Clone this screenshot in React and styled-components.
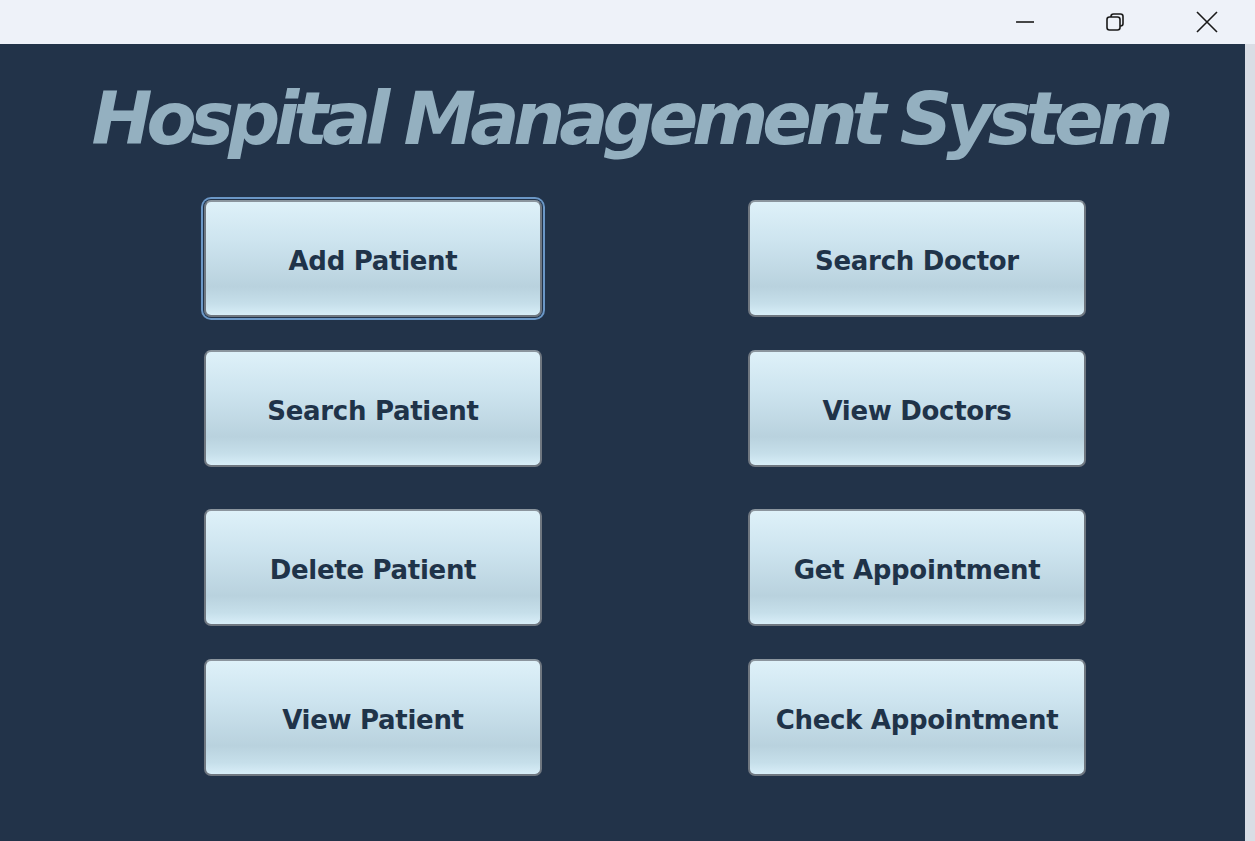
import styled, { createGlobalStyle } from 'styled-components';

const GlobalStyle = createGlobalStyle`
  html, body {
    margin: 0;
    padding: 0;
    background: #eef2f9;
    overflow: hidden;
  }
  * {
    box-sizing: border-box;
  }
`;

const Window = styled.div`
  width: 1255px;
  height: 841px;
  display: flex;
  flex-direction: column;
  background: #eef2f9;
`;

const TitleBar = styled.div`
  height: 44px;
  display: flex;
  justify-content: flex-end;
  align-items: center;
  flex-shrink: 0;
  padding-right: 2px;
`;

const WinButton = styled.div`
  width: 92px;
  height: 44px;
  margin-left: ${({ $shift }) => $shift || 0}px;
  display: flex;
  align-items: center;
  justify-content: center;
  color: #1a1a1a;
`;

const Body = styled.div`
  flex: 1;
  display: flex;
`;

const Panel = styled.div`
  flex: 1;
  background: #223349;
  display: flex;
  flex-direction: column;
`;

const ScrollStrip = styled.div`
  width: 10px;
  background: #d9dde5;
`;

const Heading = styled.h1`
  margin: 35px 0 0 0;
  text-align: center;
  font-family: 'DejaVu Sans', Verdana, sans-serif;
  font-weight: bold;
  font-style: italic;
  font-size: 73px;
  line-height: 80px;
  letter-spacing: -6.05px;
  color: #94b0c0;
  white-space: nowrap;
  padding-left: 14px;
`;

const Grid = styled.div`
  margin: 41px 0 0 204px;
  display: grid;
  grid-template-columns: 338px 338px;
  column-gap: 206px;
  grid-template-rows: 117px 117px 117px 117px;
  row-gap: 33px;
  & > :nth-child(n + 5) {
    margin-top: 9px;
  }
`;

const Button = styled.button`
  width: 338px;
  height: 117px;
  border: 2px solid #6f7780;
  border-top-color: #8b959e;
  border-radius: 7px;
  background: linear-gradient(
    to bottom,
    #def1f9 0%,
    #cde4ef 35%,
    #b9d2de 75%,
    #c6dfea 90%,
    #d8eef8 100%
  );
  font-family: 'DejaVu Sans', Tahoma, sans-serif;
  font-weight: bold;
  font-size: 26px;
  letter-spacing: -0.3px;
  color: #1f3349;
  cursor: pointer;
  box-shadow: ${({ $focused }) => ($focused ? '0 0 0 1px #223349, 0 0 0 3px #6b97c6' : 'none')};
  padding: 4px 0 0 0;
`;

const Minimize = () => (
  <svg width="20" height="20" viewBox="0 0 20 20" fill="none" stroke="currentColor" strokeWidth="1.6">
    <path d="M1 10h18" />
  </svg>
);

const Restore = () => (
  <svg width="20" height="20" viewBox="0 0 20 20" fill="none" stroke="currentColor" strokeWidth="1.6">
    <rect x="2" y="5" width="13" height="13" rx="2.5" />
    <path d="M6 5V4.5A2.5 2.5 0 0 1 8.5 2h7A2.5 2.5 0 0 1 18 4.5v7a2.5 2.5 0 0 1-2.5 2.5H15" />
  </svg>
);

const Close = () => (
  <svg width="22" height="22" viewBox="0 0 22 22" fill="none" stroke="currentColor" strokeWidth="1.6">
    <path d="M1 1l20 20M21 1L1 21" />
  </svg>
);

const buttons = [
  'Add Patient',
  'Search Doctor',
  'Search Patient',
  'View Doctors',
  'Delete Patient',
  'Get Appointment',
  'View Patient',
  'Check Appointment',
];

export default function App() {
  return (
    <Window>
      <GlobalStyle />
      <TitleBar>
        <WinButton><Minimize /></WinButton>
        <WinButton $shift={-2}><Restore /></WinButton>
        <WinButton><Close /></WinButton>
      </TitleBar>
      <Body>
        <Panel>
          <Heading>Hospital Management System</Heading>
          <Grid>
            {buttons.map((label, i) => (
              <Button key={label} $focused={i === 0}>
                {label}
              </Button>
            ))}
          </Grid>
        </Panel>
        <ScrollStrip />
      </Body>
    </Window>
  );
}
